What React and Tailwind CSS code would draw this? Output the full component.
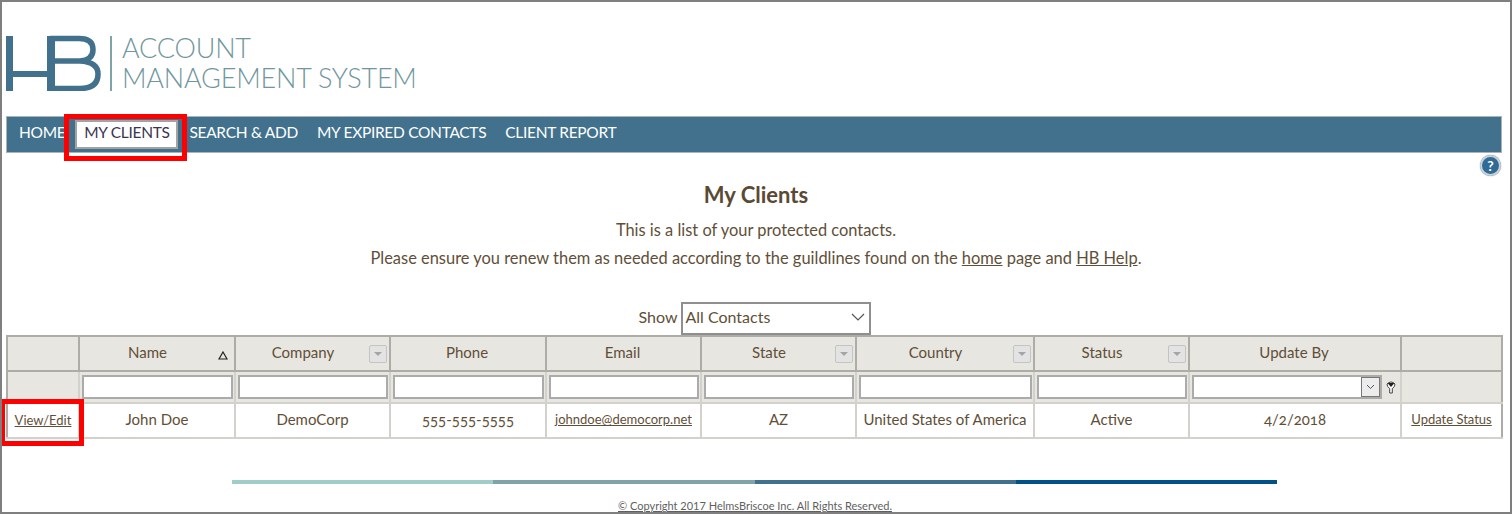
import React from "react";

const cols = [72, 156, 155, 156, 155, 155, 178, 155, 212, 101];

function Filt() {
  return (
    <span className="w-[18px] h-[18px] border border-[#c4c4c4] bg-[#e3e3e3] rounded-[2px] flex items-center justify-center absolute right-[2px] top-[8px]">
      <span className="w-0 h-0 border-x-[4px] border-x-transparent border-t-[4px] border-t-[#a5a5a5]" />
    </span>
  );
}

function Head({ children, filter, sort }) {
  return (
    <th className={`relative font-normal text-[15px] h-[35px] p-0 pb-[2px] border-r-2 border-b-2 border-[#aeaca6] text-[#5f4f38] bg-[#e8e6e1] last:border-r-0 ${filter || sort ? "pr-[19px]" : "pr-[2px]"}`}>
      {children}
      {filter && <Filt />}
      {sort && (
        <svg className="absolute right-[6px] top-[14px]" width="10" height="9" viewBox="0 0 10 9">
          <path d="M5 1 L9 8 H1 Z" fill="none" stroke="#222" strokeWidth="1.2" />
        </svg>
      )}
    </th>
  );
}

function FilterCell({ select }) {
  return (
    <td className="p-0 h-[32px] bg-[#e8e6e1] border-r-2 border-b-2 border-[#d3d1cc] align-middle">
      <div className="flex items-center pl-[2px] pr-[1px]">
        {select ? (
          <div className="flex items-center w-full">
            <div className="w-[190px] h-[24px] border-2 border-[#ababab] bg-white flex justify-end shrink-0">
              <span className="w-[19px] h-[20px] border border-[#777] bg-[#ececec] flex items-center justify-center">
                <svg width="9" height="6" viewBox="0 0 9 6"><path d="M1 1 L4.5 4.5 L8 1" fill="none" stroke="#555" strokeWidth="1" /></svg>
              </span>
            </div>
            <svg className="ml-[4px] shrink-0" width="10" height="13" viewBox="0 0 10 13">
              <path d="M1 3 Q5 -1 9 3 Q9 6 6.3 7.5 V12 H3.7 V7.5 Q1 6 1 3 Z" fill="#fff" stroke="#444" strokeWidth="1" />
              <path d="M1.5 2 H8.5 L5 6 Z" fill="#222" />
            </svg>
          </div>
        ) : (
          <div className="w-full h-[24px] border-2 border-[#ababab] bg-white" />
        )}
      </div>
    </td>
  );
}

function Cell({ children, className = "pb-[3px]" }) {
  return (
    <td className={`p-0 text-center h-[35px] text-[#5f4f38] border-r-2 border-b-2 border-[#d3d1cc] last:border-r-0 oldstyle-nums ${className}`}>
      {children}
    </td>
  );
}

export default function App() {
  return (
    <div
      className="relative w-[1512px] h-[514px] overflow-hidden bg-white border-2 border-[#7f7f7f] text-[#5f4f38]"
      style={{ fontFamily: '"Lato", "Open Sans", sans-serif' }}
    >
      {/* Logo */}
      <div className="h-[114px] pl-[4px] pt-[31px] flex items-start">
        <svg className="shrink-0" width="96" height="58" viewBox="0 0 96 58">
          <g fill="#41718c">
            <rect x="0" y="3" width="7" height="55" />
            <rect x="41" y="3" width="8" height="55" />
            <rect x="7" y="38" width="34" height="6" />
          </g>
          <path
            d="M44 5.5 H73 Q87 5.5 87 16.5 Q87 27 74 28 H48 M74 28 Q92 29 92 41 Q92 55.5 74 55.5 H44"
            fill="none"
            stroke="#41718c"
            strokeWidth="5.5"
          />
        </svg>
        <div className="w-[2px] h-[55px] bg-[#7ea3a8] ml-[8px] mt-[3px] shrink-0" />
        <div className="ml-[10px] text-[#6f979d] text-[27px] leading-[30px] font-light tracking-[-0.2px] whitespace-nowrap">
          <div>ACCOUNT</div>
          <div>MANAGEMENT SYSTEM</div>
        </div>
      </div>

      {/* Nav */}
      <div className="ml-[4px] w-[1496px] h-[37px] bg-[#41718c] border border-[#a9b3b8] flex items-center pl-[12px] pb-[3px] text-[15.5px] tracking-[-0.3px] text-white whitespace-nowrap">
        <span>HOME</span>
        <span className="ml-[10px] mr-[11px] mt-[3px] w-[103px] h-[29px] flex items-center justify-center pb-[3px] bg-white border-2 border-[#a3a3a3] text-[#3a3550]">MY CLIENTS</span>
        <span>SEARCH &amp; ADD</span>
        <span className="ml-[19px]">MY EXPIRED CONTACTS</span>
        <span className="ml-[19px]">CLIENT REPORT</span>
      </div>

      {/* Help icon */}
      <div className="flex justify-end pr-[9px] mt-[2px] h-[20px]">
        <span className="w-[21px] h-[21px] rounded-full bg-[#2f6b94] border-2 border-[#c6d3dc] text-white text-[14px] font-bold flex items-center justify-center leading-none shadow-[0_0_1px_#555]">
          ?
        </span>
      </div>

      {/* Heading */}
      <h1 className="text-center text-[22px] leading-[28px] font-bold text-[#5a4a33] mt-[6px]">My Clients</h1>
      <p className="text-center text-[16.4px] leading-[24px] mt-[9px]">This is a list of your protected contacts.</p>
      <p className="text-center text-[16.45px] leading-[24px] mt-[4px]">
        Please ensure you renew them as needed according to the guildlines found on the <u>home</u> page and <u>HB Help</u>.
      </p>

      {/* Show */}
      <div className="flex items-center justify-center gap-[3px] mt-[32px] h-[33px] text-[16px] pr-[2px]">
        <span className="pb-[3px] -ml-[1px]">Show</span>
        <div className="w-[190px] h-[33px] border-2 border-[#8f8f8f] bg-white flex items-center justify-between pl-[3px] pr-[4px] pb-[3px]">
          <span>All Contacts</span>
          <svg width="14" height="8" viewBox="0 0 14 8"><path d="M1 1 L7 7 L13 1" fill="none" stroke="#555" strokeWidth="1.2" /></svg>
        </div>
      </div>

      {/* Table */}
      <table className="ml-[4px] w-[1495px] table-fixed border-collapse border-2 border-[#aeaca6] border-b-[#b9b9b9] text-[15px]">
        <colgroup>
          {cols.map((w, i) => (
            <col key={i} style={{ width: w }} />
          ))}
        </colgroup>
        <thead>
          <tr>
            <Head />
            <Head sort>Name</Head>
            <Head filter>Company</Head>
            <Head>Phone</Head>
            <Head>Email</Head>
            <Head filter>State</Head>
            <Head filter>Country</Head>
            <Head filter>Status</Head>
            <Head>Update By</Head>
            <Head />
          </tr>
          <tr>
            <td className="bg-[#e8e6e1] border-r-2 border-b-2 border-[#d3d1cc]" />
            <FilterCell />
            <FilterCell />
            <FilterCell />
            <FilterCell />
            <FilterCell />
            <FilterCell />
            <FilterCell />
            <FilterCell select />
            <td className="bg-[#e8e6e1] border-b-2 border-[#d3d1cc]" />
          </tr>
        </thead>
        <tbody>
          <tr>
            <Cell className="text-[13px]"><u>View/Edit</u></Cell>
            <Cell className="pb-[2px]">John Doe</Cell>
            <Cell className="pb-[2px]">DemoCorp</Cell>
            <Cell className="pb-[3px]">555-555-5555</Cell>
            <Cell className="text-[13px] pb-[1px]"><u>johndoe@democorp.net</u></Cell>
            <Cell className="pb-[2px]">AZ</Cell>
            <Cell className="pb-[2px]">United States of America</Cell>
            <Cell className="pb-[2px]">Active</Cell>
            <Cell className="pb-[3px]">4/2/2018</Cell>
            <Cell className="text-[13px] pb-[1px]"><u>Update Status</u></Cell>
          </tr>
        </tbody>
      </table>

      {/* Colour bar */}
      <div className="flex ml-[230px] w-[1045px] h-[4px] mt-[41px]">
        <div className="flex-1 bg-[#a0cdc8]" />
        <div className="flex-1 bg-[#7ea3a8]" />
        <div className="flex-1 bg-[#41718c]" />
        <div className="flex-1 bg-[#005287]" />
      </div>
      <p className="text-center text-[11px] leading-[14px] mt-[15px] -ml-[2px] underline text-[#5f5f5f]">© Copyright 2017 HelmsBriscoe Inc. All Rights Reserved.</p>

      {/* Red annotation boxes */}
      <div className="absolute left-[62px] top-[112px] w-[123px] h-[47px] border-[5px] border-[#ff0000]" />
      <div className="absolute left-[-2px] top-[397px] w-[84px] h-[47px] border-[5px] border-[#ff0000]" />
    </div>
  );
}
